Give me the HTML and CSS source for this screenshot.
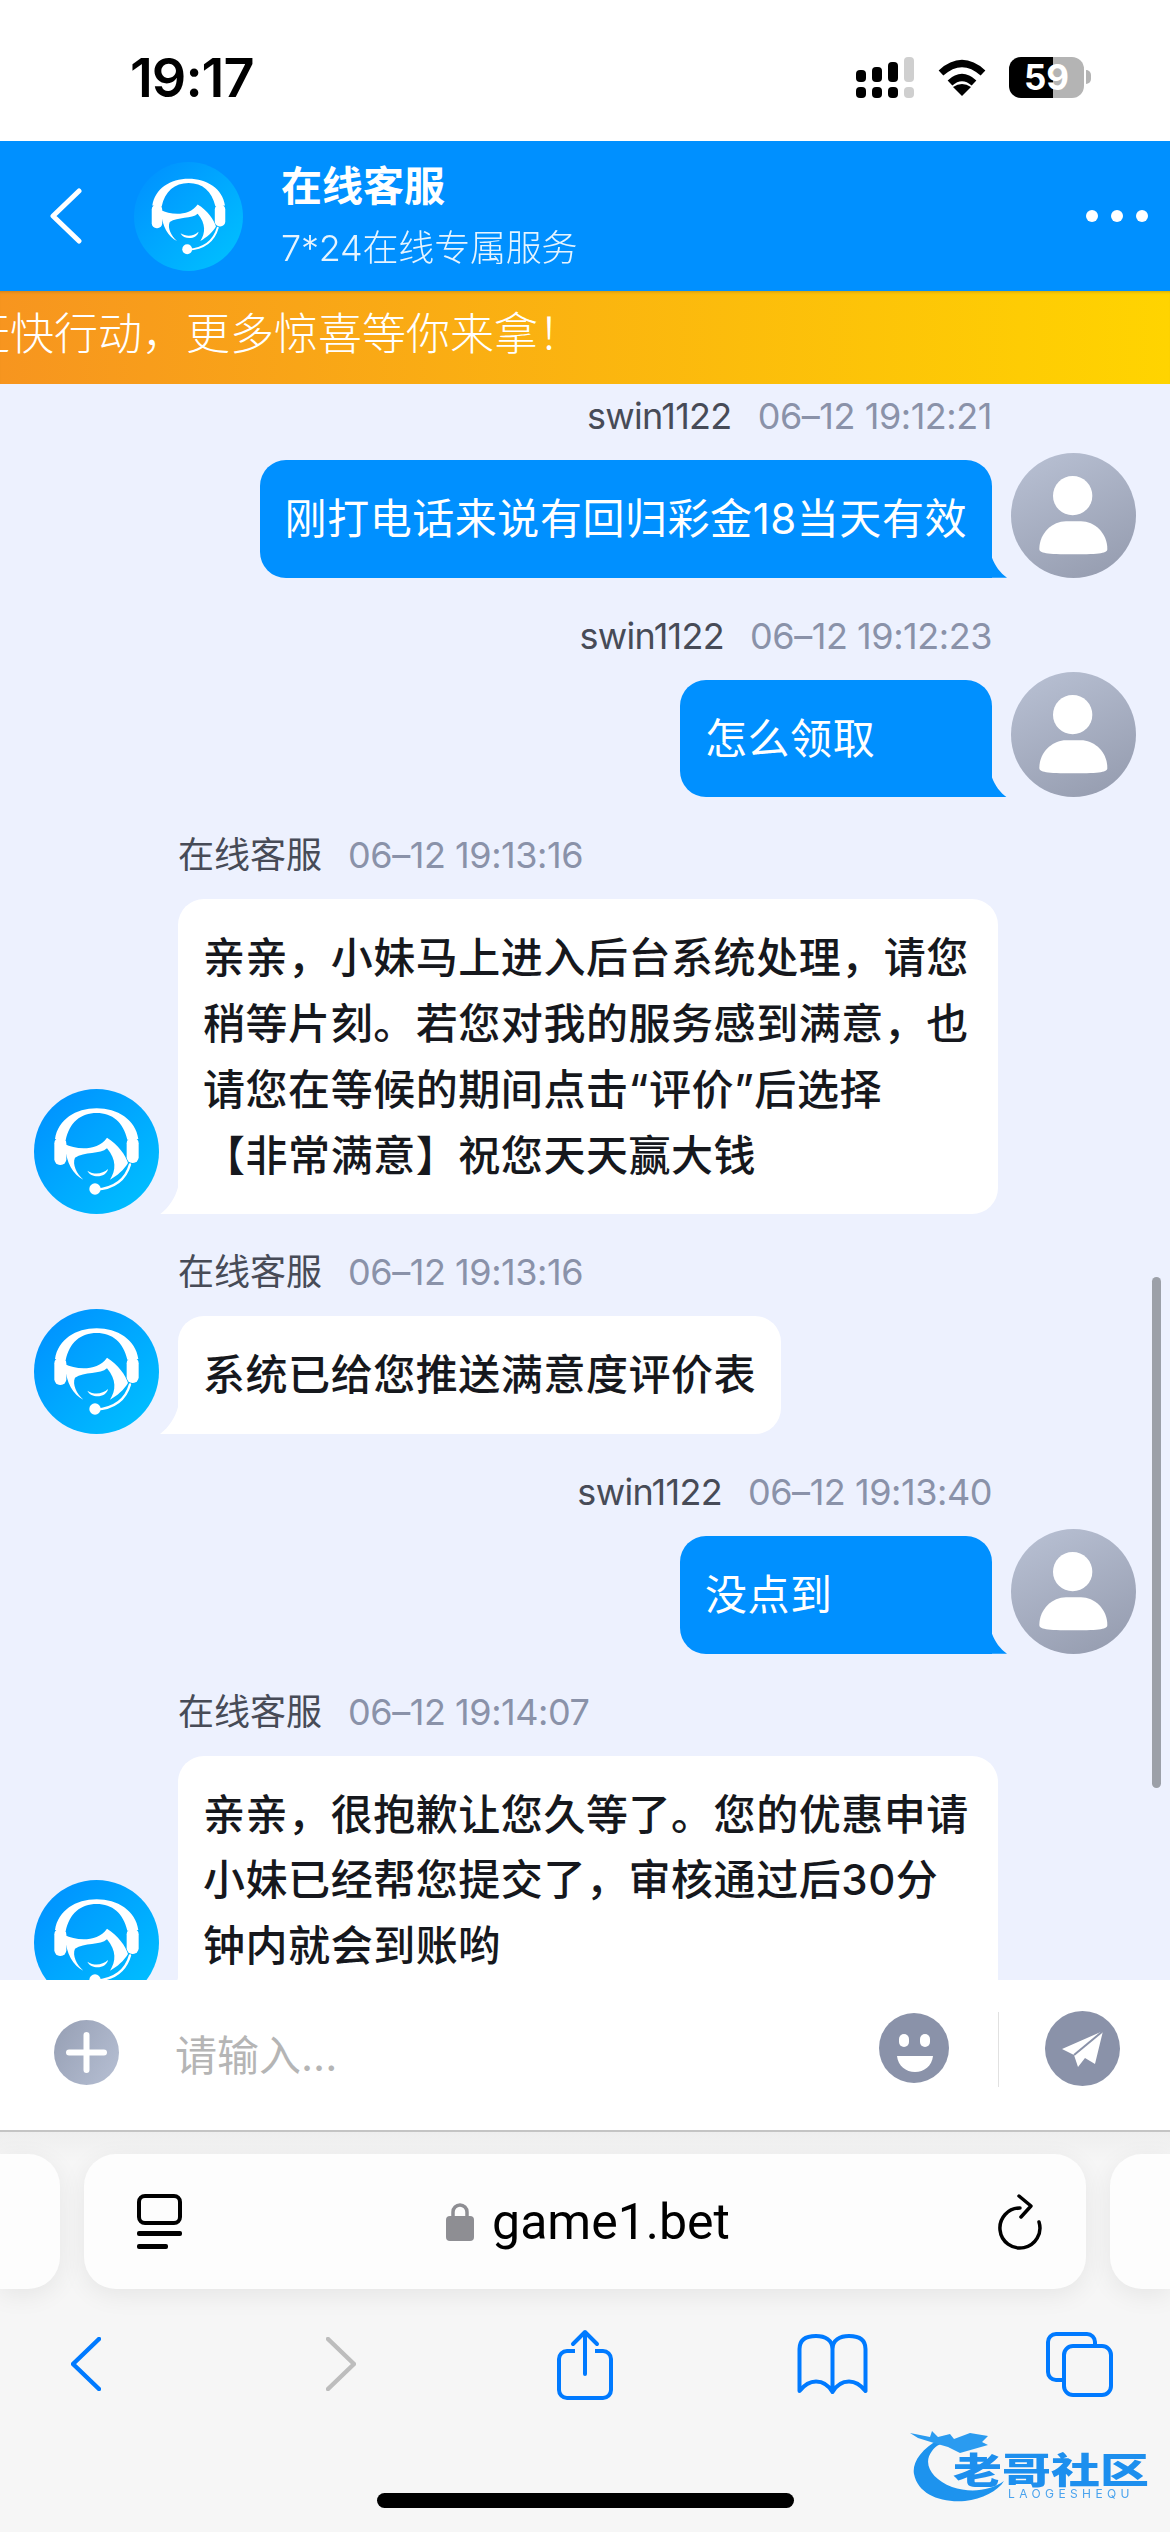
FILE: index.html
```html
<!DOCTYPE html>
<html lang="zh-CN">
<head>
    <meta charset="UTF-8">
    <meta name="viewport" content="width=device-width, initial-scale=1.0">
    <title>在线客服</title>
    <link rel="stylesheet" href="styles.css">
</head>
<body>
    <svg class="defs" width="0" height="0">
        <defs>
            <linearGradient id="agent-bg" x1="0.1" y1="0.1" x2="0.9" y2="0.9">
                <stop offset="0" stop-color="#0093ff"/>
                <stop offset="1" stop-color="#00beff"/>
            </linearGradient>
            <linearGradient id="user-bg" x1="0.25" y1="0.05" x2="0.7" y2="1">
                <stop offset="0" stop-color="#b5bdd0"/>
                <stop offset="1" stop-color="#979eb1"/>
            </linearGradient>
            <linearGradient id="plus-bg" x1="0" y1="0.2" x2="1" y2="0.8">
                <stop offset="0" stop-color="#98a1b6"/>
                <stop offset="1" stop-color="#b4bdd1"/>
            </linearGradient>
            <symbol id="agent" viewBox="0 0 375 375">
                <circle cx="187.500" cy="187.500" r="187.500" fill="url(#agent-bg)"/>
                <path fill="#fff" d="M63 150C72 92 125 58 188 58C250 58 305 92 313 150L280 152C268 100 235 72 188 72C140 72 106 100 95 154Z"/>
                <rect x="61" y="146" width="36" height="82" rx="17" fill="#fff"/>
                <rect x="278" y="146" width="36" height="76" rx="17" fill="#fff"/>
                <path fill="#fff" d="M92 165C125 182 190 188 219 146C252 166 276 200 282 222C270 242 250 260 228 272C246 245 248 212 219 178C200 196 150 188 123 206C114 226 128 254 148 272C118 258 96 222 92 165Z"/>
                <path fill="#fff" d="M160 245C180 258 205 256 222 240C218 266 172 270 160 245Z"/>
                <path fill="none" stroke="#fff" stroke-width="7" stroke-linecap="round" d="M288 226C275 272 240 298 185 302"/>
                <circle cx="183" cy="300" r="17" fill="#fff"/>
            </symbol>
            <symbol id="user" viewBox="0 0 375 375">
                <circle cx="187.500" cy="187.500" r="187.500" fill="url(#user-bg)"/>
                <circle cx="185" cy="128" r="59" fill="#fff"/>
                <path fill="#fff" d="M85 288C85 240 125 205 165 205H210C250 205 289 240 289 288C289 300 270 304 187 304C105 304 85 300 85 288Z"/>
            </symbol>
        </defs>
    </svg>

    <div class="status-bar">
        <span class="clock">19:17</span>
        <div class="status-icons">
            <svg class="signal" width="58" height="41" viewBox="0 0 58 41">
                <rect x="0" y="13" width="10" height="12" rx="4"/>
                <rect x="16" y="10" width="10" height="15" rx="4"/>
                <rect x="32" y="5" width="10" height="20" rx="4"/>
                <rect x="48" y="0" width="10" height="25" rx="4" fill="#cfcfcf"/>
                <rect x="0" y="30" width="10" height="11" rx="4"/>
                <rect x="16" y="30" width="10" height="11" rx="4"/>
                <rect x="32" y="30" width="10" height="11" rx="4"/>
                <rect x="48" y="30" width="10" height="11" rx="4" fill="#cfcfcf"/>
            </svg>
            <svg class="wifi" width="50" height="37" viewBox="0 0 50 37">
                <path d="M4 14Q25 -5 46 14" fill="none" stroke="#000" stroke-width="7"/>
                <path d="M13 24Q25 13 37 24" fill="none" stroke="#000" stroke-width="7"/>
                <path d="M25 37L16 28Q25 22 34 28Z"/>
            </svg>
            <div class="battery">59</div>
        </div>
    </div>

    <header class="chat-header">
        <svg class="back-icon" width="32" height="56" viewBox="0 0 32 56">
            <path d="M29 3L3 28L29 53" fill="none" stroke="#fff" stroke-width="5" stroke-linecap="round" stroke-linejoin="round"/>
        </svg>
        <svg class="header-avatar" width="109" height="109"><use href="#agent"/></svg>
        <div class="header-text">
            <div class="header-title">在线客服</div>
            <div class="header-sub">7*24在线专属服务</div>
        </div>
        <div class="more-dots"><i></i><i></i><i></i></div>
    </header>

    <div class="notice">
        <span class="notice-text">赶快行动，更多惊喜等你来拿！</span>
    </div>

    <main class="chat">
        <div class="msg msg-me">
            <div class="msg-body">
                <div class="meta"><span class="who">swin1122</span><span class="when">06–12 19:12:21</span></div>
                <div class="bubble">刚打电话来说有回归彩金18当天有效</div>
            </div>
            <svg class="avatar"><use href="#user"/></svg>
        </div>
        <div class="msg msg-me">
            <div class="msg-body">
                <div class="meta"><span class="who">swin1122</span><span class="when">06–12 19:12:23</span></div>
                <div class="bubble">怎么领取</div>
            </div>
            <svg class="avatar"><use href="#user"/></svg>
        </div>
        <div class="msg msg-agent">
            <svg class="avatar"><use href="#agent"/></svg>
            <div class="msg-body">
                <div class="meta"><span class="who">在线客服</span><span class="when">06–12 19:13:16</span></div>
                <div class="bubble">亲亲，小妹马上进入后台系统处理，请您稍等片刻。若您对我的服务感到满意，也请您在等候的期间点击“评价”后选择<br>【非常满意】祝您天天赢大钱</div>
            </div>
        </div>
        <div class="msg msg-agent">
            <svg class="avatar"><use href="#agent"/></svg>
            <div class="msg-body">
                <div class="meta"><span class="who">在线客服</span><span class="when">06–12 19:13:16</span></div>
                <div class="bubble">系统已给您推送满意度评价表</div>
            </div>
        </div>
        <div class="msg msg-me">
            <div class="msg-body">
                <div class="meta"><span class="who">swin1122</span><span class="when">06–12 19:13:40</span></div>
                <div class="bubble">没点到</div>
            </div>
            <svg class="avatar"><use href="#user"/></svg>
        </div>
        <div class="msg msg-agent">
            <svg class="avatar"><use href="#agent"/></svg>
            <div class="msg-body">
                <div class="meta"><span class="who">在线客服</span><span class="when">06–12 19:14:07</span></div>
                <div class="bubble">亲亲，很抱歉让您久等了。您的优惠申请小妹已经帮您提交了，审核通过后30分钟内就会到账哟</div>
            </div>
        </div>
        <div class="scroll-thumb"></div>
    </main>

    <div class="composer">
        <svg class="plus-btn" width="65" height="65" viewBox="0 0 65 65">
            <circle cx="32.500" cy="32.500" r="32.500" fill="url(#plus-bg)"/>
            <path d="M32.500 15V50M15 32.500H50" stroke="#fff" stroke-width="6" stroke-linecap="round"/>
        </svg>
        <div class="placeholder">请输入...</div>
        <svg class="emoji-btn" width="70" height="70" viewBox="0 0 70 70">
            <circle cx="35" cy="35" r="35" fill="#8a92a9"/>
            <rect x="20" y="21" width="10" height="13" rx="5" fill="#fff"/>
            <rect x="41" y="21" width="10" height="13" rx="5" fill="#fff"/>
            <path d="M18 43H54C53 53 45 59 36 59C27 59 19 53 18 43Z" fill="#fff"/>
        </svg>
        <div class="composer-line"></div>
        <svg class="send-btn" width="75" height="75" viewBox="0 0 75 75">
            <circle cx="37.500" cy="37.500" r="37.500" fill="#8a92a9"/>
            <path d="M58 20L17 38L29 44L33 56L40 47L50 53Z" fill="#fff"/>
            <path d="M58 20L29 44" stroke="#8a92a9" stroke-width="2"/>
        </svg>
    </div>

    <div class="safari">
        <div class="url-row">
            <div class="tab-peek tab-left"></div>
            <div class="url-bar">
                <svg class="page-icon" width="45" height="56" viewBox="0 0 45 56">
                    <rect x="2" y="2" width="41" height="27" rx="6" fill="none" stroke="#000" stroke-width="4"/>
                    <rect x="0" y="37" width="45" height="5" rx="2" fill="#000"/>
                    <rect x="0" y="50" width="31" height="5" rx="2" fill="#000"/>
                </svg>
                <div class="url-text">
                    <svg width="28" height="39" viewBox="0 0 28 39">
                        <path d="M7 17V10A7 7 0 0 1 21 10V17" fill="none" stroke="#8e8e93" stroke-width="3.500"/>
                        <rect x="0" y="14" width="28" height="25" rx="4" fill="#8e8e93"/>
                    </svg>
                    <span>game1.bet</span>
                </div>
                <svg class="reload-icon" width="44" height="56" viewBox="0 0 44 56">
                    <path d="M22 14A20 20 0 1 0 41 28" fill="none" stroke="#000" stroke-width="3.500" stroke-linecap="round"/>
                    <path d="M21 2L33 12L23 23" fill="none" stroke="#000" stroke-width="3.500" stroke-linecap="round" stroke-linejoin="round"/>
                </svg>
            </div>
            <div class="tab-peek tab-right"></div>
        </div>
        <div class="toolbar">
            <svg class="tool-back" width="30" height="54" viewBox="0 0 30 54">
                <path d="M28 2L2 27L28 52" fill="none" stroke="#007aff" stroke-width="4.500" stroke-linecap="round" stroke-linejoin="round"/>
            </svg>
            <svg class="tool-forward" width="30" height="54" viewBox="0 0 30 54">
                <path d="M2 2L28 27L2 52" fill="none" stroke="#bdbdbd" stroke-width="4.500" stroke-linecap="round" stroke-linejoin="round"/>
            </svg>
            <svg class="tool-share" width="56" height="71" viewBox="0 0 56 71">
                <path d="M18 22H10A8 8 0 0 0 2 30V61A8 8 0 0 0 10 69H46A8 8 0 0 0 54 61V30A8 8 0 0 0 46 22H38" fill="none" stroke="#007aff" stroke-width="4"/>
                <path d="M28 45V3M16 15L28 3L40 15" fill="none" stroke="#007aff" stroke-width="4" stroke-linecap="round" stroke-linejoin="round"/>
            </svg>
            <svg class="tool-book" width="71" height="60" viewBox="0 0 71 60">
                <path d="M35.500 58V15C35.500 6 28 2 19 2C9 2 2.500 6 2.500 15V57C8 50 13 47.500 19 47.500C26 47.500 32 52 35.500 58C39 52 45 47.500 52 47.500C58 47.500 63 50 68.500 57V15C68.500 6 62 2 52 2C43 2 35.500 6 35.500 15" fill="none" stroke="#007aff" stroke-width="4" stroke-linejoin="round"/>
            </svg>
            <svg class="tool-tabs" width="67" height="66" viewBox="0 0 67 66">
                <path d="M49 13V11A8 8 0 0 0 41 3H10A8 8 0 0 0 2 11V41A8 8 0 0 0 10 49H17" fill="none" stroke="#007aff" stroke-width="4"/>
                <rect x="18" y="15" width="47" height="49" rx="9" fill="none" stroke="#007aff" stroke-width="4"/>
            </svg>
        </div>
        <div class="home-bar"></div>
        <div class="watermark">
            <svg width="100" height="74" viewBox="0 0 100 74">
                <path fill="#1d93ee" d="M30 10C10 20 2 35 4 45C8 65 30 74 55 72C72 70 88 62 94 52C80 62 60 64 42 58C22 50 12 35 22 22C26 16 32 14 38 13Z"/>
                <path fill="#2a9bf0" d="M0 4L20 8L22 2L28 8L40 5L44 10L60 4L78 7L72 13L78 16L64 20L50 24L38 18L24 14L8 9Z"/>
            </svg>
            <span class="wm-name">老哥社区</span>
            <span class="wm-latin">LAOGESHEQU</span>
        </div>
    </div>
</body>
</html>
```

FILE: styles.css
```css
* {
    box-sizing: border-box;
}
html, body {
    margin: 0;
    padding: 0;
}
body {
    width: 1170px;
    height: 2532px;
    display: flex;
    flex-direction: column;
    overflow: hidden;
    background-color: #fff;
    font-family: Inter, "Noto Sans CJK SC", sans-serif;
}
.defs {
    position: absolute;
}

/* status bar */
.status-bar {
    height: 141px;
    flex: none;
    display: flex;
    align-items: flex-start;
    justify-content: space-between;
    padding: 0 86px 0 130px;
    background-color: #fff;
}
.clock {
    margin-top: 47px;
    font-size: 54px;
    line-height: 62px;
    font-weight: 600;
    letter-spacing: -1px;
    color: #000;
}
.status-icons {
    margin-top: 57px;
    display: flex;
    align-items: center;
}
.wifi {
    margin-left: 23px;
}
.battery {
    position: relative;
    margin-left: 22px;
    width: 75px;
    height: 41px;
    border-radius: 12px;
    background: linear-gradient(90deg, #000 58.500%, #b4b4b4 58.500%);
    color: #fff;
    font-size: 35px;
    line-height: 41px;
    font-weight: 700;
    text-align: center;
}
.battery::after {
    content: "";
    position: absolute;
    right: -7px;
    top: 13px;
    width: 5px;
    height: 14px;
    border-radius: 0 6px 6px 0;
    background-color: #b4b4b4;
}

/* header */
.chat-header {
    height: 150px;
    flex: none;
    display: flex;
    align-items: center;
    padding: 0 22px 0 50px;
    background-color: #0090ff;
    color: #fff;
}
.back-icon {
    flex: none;
}
.header-avatar {
    flex: none;
    margin-left: 52px;
}
.header-text {
    margin-left: 38px;
    flex: 1;
}
.header-title {
    margin-top: 2px;
    font-size: 41px;
    line-height: 50px;
    font-weight: 700;
}
.header-sub {
    margin-top: 12px;
    font-size: 36px;
    line-height: 50px;
    font-weight: 300;
    letter-spacing: -0.200px;
    opacity: 0.9;
}
.more-dots {
    display: flex;
    gap: 13px;
}
.more-dots i {
    display: block;
    width: 12px;
    height: 12px;
    border-radius: 50%;
    background-color: #fff;
}

/* notice strip */
.notice {
    height: 93px;
    flex: none;
    display: flex;
    align-items: center;
    overflow: hidden;
    background: linear-gradient(90deg, #f7951f 0%, #ffd400 100%);
    box-shadow: inset 0 3px 3px -2px rgba(130, 90, 0, 0.35);
}
.notice-text {
    flex: none;
    margin-left: -34px;
    margin-top: -7px;
    font-size: 44px;
    line-height: 60px;
    font-weight: 300;
    color: #fff;
    white-space: nowrap;
}

/* messages */
.chat {
    position: relative;
    flex: 1;
    min-height: 0;
    overflow: hidden;
    display: flex;
    flex-direction: column;
    gap: 35px;
    padding: 9px 34px 0;
    background-color: #edf1fe;
}
.msg {
    display: flex;
    align-items: flex-end;
    gap: 19px;
    flex: none;
}
.msg-me {
    justify-content: flex-end;
}
.msg-me .msg-body {
    align-items: flex-end;
}
.msg-me .who {
    letter-spacing: -0.700px;
}
.msg-body {
    display: flex;
    flex-direction: column;
    align-items: flex-start;
}
.avatar {
    flex: none;
    width: 125px;
    height: 125px;
}
.meta {
    height: 46px;
    margin-bottom: 21px;
    display: flex;
    gap: 26px;
    font-size: 36px;
    line-height: 46px;
    white-space: nowrap;
}
.who {
    color: #474b57;
}
.when {
    color: #8a92a9;
    letter-spacing: -0.450px;
}
.bubble {
    position: relative;
    min-width: 312px;
    max-width: 820px;
    padding: 26px 25px;
    font-size: 42px;
    line-height: 65.700px;
    letter-spacing: 0.550px;
    border-radius: 26px;
}
.msg-me .bubble {
    background-color: #0090ff;
    color: #fff;
    border-bottom-right-radius: 0;
}
.msg-me .bubble::after {
    content: "";
    position: absolute;
    right: -15px;
    bottom: 0;
    width: 15px;
    height: 20px;
    background-color: #0090ff;
    clip-path: path("M0 0C3 8 8 15 15 20L0 20Z");
}
.msg-agent .bubble {
    width: fit-content;
    background-color: #fff;
    color: #16181d;
    font-weight: 500;
    border-bottom-left-radius: 0;
}
.msg-agent .bubble::after {
    content: "";
    position: absolute;
    left: -18px;
    bottom: 0;
    width: 18px;
    height: 27px;
    background-color: #fff;
    clip-path: path("M18 0C15 11 9 20 0 27L18 27Z");
}
.scroll-thumb {
    position: absolute;
    left: 1152px;
    top: 893px;
    width: 9px;
    height: 511px;
    border-radius: 5px;
    background-color: #9ca0a8;
}

/* input row */
.composer {
    height: 152px;
    flex: none;
    display: flex;
    align-items: center;
    padding: 0 50px 14px 54px;
    background-color: #fff;
    border-bottom: 2px solid #c4c4c4;
}
.plus-btn {
    flex: none;
    margin-top: 8px;
}
.placeholder {
    flex: 1;
    margin-left: 56px;
    margin-top: 16px;
    font-size: 42px;
    line-height: 60px;
    color: #b5b5b5;
}
.emoji-btn {
    flex: none;
}
.composer-line {
    flex: none;
    width: 1px;
    height: 75px;
    margin-left: 49px;
    margin-top: 2px;
    background-color: #e1e1e1;
}
.send-btn {
    flex: none;
    margin-left: 46px;
}

/* browser chrome */
.safari {
    position: relative;
    height: 400px;
    flex: none;
    background: linear-gradient(180deg, #eeeeee 0, #f6f6f6 30px);
}
.url-row {
    display: flex;
    gap: 24px;
    padding-top: 22px;
}
.tab-peek {
    height: 135px;
    background-color: #fdfdfd;
    box-shadow: 0 6px 26px rgba(0, 0, 0, 0.07);
}
.tab-left {
    width: 60px;
    flex: none;
    border-radius: 0 32px 32px 0;
}
.tab-right {
    flex: 1;
    border-radius: 32px 0 0 32px;
}
.url-bar {
    position: relative;
    width: 1002px;
    height: 135px;
    flex: none;
    display: flex;
    align-items: center;
    justify-content: space-between;
    padding: 0 44px 0 53px;
    border-radius: 32px;
    background-color: #fdfdfd;
    box-shadow: 0 6px 26px rgba(0, 0, 0, 0.07);
}
.url-text {
    display: flex;
    align-items: center;
    gap: 18px;
    margin-right: 4px;
    font-size: 50px;
    line-height: 60px;
    color: #000;
    font-family: Roboto, "Liberation Sans", sans-serif;
}
.toolbar {
    display: flex;
    align-items: center;
    height: 88px;
    margin-top: 31px;
    padding-left: 71px;
}
.tool-forward {
    margin-left: 225px;
}
.tool-share {
    margin-left: 201px;
}
.tool-book {
    margin-left: 184px;
}
.tool-tabs {
    margin-left: 178px;
}
.home-bar {
    width: 417px;
    height: 15px;
    margin: 85px auto 0;
    border-radius: 8px;
    background-color: #000;
}

/* watermark over the toolbar */
.watermark {
    position: absolute;
    left: 910px;
    top: 297px;
    width: 240px;
    height: 74px;
    filter: blur(0.7px);
}
.wm-name {
    position: absolute;
    left: 43px;
    top: 21px;
    font-family: "Noto Sans CJK SC", sans-serif;
    font-size: 36px;
    line-height: 36px;
    font-weight: 900;
    color: #1d8fee;
    white-space: nowrap;
    transform: scaleX(1.360);
    transform-origin: left center;
}
.wm-latin {
    position: absolute;
    left: 98px;
    top: 58px;
    font-size: 12px;
    line-height: 14px;
    letter-spacing: 4.400px;
    color: #4aa3ee;
    white-space: nowrap;
}
```
